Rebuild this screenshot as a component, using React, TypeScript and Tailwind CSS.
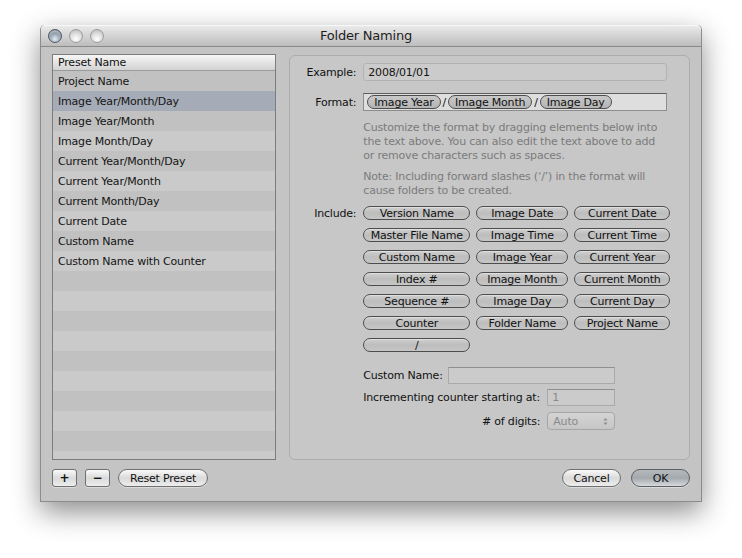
import React from "react";

const F = "font-['DejaVu_Sans',sans-serif] tracking-[-0.2px]";

const presets = [
  "Project Name",
  "Image Year/Month/Day",
  "Image Year/Month",
  "Image Month/Day",
  "Current Year/Month/Day",
  "Current Year/Month",
  "Current Month/Day",
  "Current Date",
  "Custom Name",
  "Custom Name with Counter",
];

const includes: [string, string, string][] = [
  ["Version Name", "Image Date", "Current Date"],
  ["Master File Name", "Image Time", "Current Time"],
  ["Custom Name", "Image Year", "Current Year"],
  ["Index #", "Image Month", "Current Month"],
  ["Sequence #", "Image Day", "Current Day"],
  ["Counter", "Folder Name", "Project Name"],
  ["/", "", ""],
];

function Pill({ label, w }: { label: string; w: string }) {
  return (
    <div
      className={`${w} h-[14px] rounded-full border border-[#4d4d4d] bg-gradient-to-b from-[#cfcfcf] via-[#bdbdbd] to-[#c6c6c6] flex items-center justify-center text-[11px] leading-none text-[#111] shadow-[inset_0_1px_0_rgba(255,255,255,0.35)] whitespace-nowrap`}
    >
      {label}
    </div>
  );
}

function Token({ label }: { label: string }) {
  return (
    <span className="inline-flex items-center h-[14px] px-[6px] rounded-full border border-[#4d4d4d] bg-gradient-to-b from-[#c9c9c9] to-[#b4b4b4] text-[11px] leading-none text-[#111] whitespace-nowrap">
      {label}
    </span>
  );
}

function Light({ active }: { active?: boolean }) {
  return (
    <div
      className={
        active
          ? "w-[14px] h-[14px] rounded-full border border-[#4f5863] bg-[radial-gradient(circle_at_50%_75%,#e3ecf3_0%,#9aa8b6_45%,#48525d_100%)] shadow-[inset_0_2px_2px_rgba(255,255,255,0.5)]"
          : "w-[14px] h-[14px] rounded-full border border-[#9c9c9c] bg-[radial-gradient(circle_at_50%_75%,#ffffff_0%,#dedede_50%,#b5b5b5_100%)]"
      }
    />
  );
}

function Btn({ children, w, def, round = true }: { children: React.ReactNode; w: string; def?: boolean; round?: boolean }) {
  return (
    <div
      className={`${w} h-[18px] ${round ? "rounded-full" : "rounded-[3px]"} border ${
        def
          ? "border-[#5a5e63] bg-gradient-to-b from-[#b5b9be] via-[#a4a9ae] to-[#d7dadd]"
          : "border-[#6f6f6f] bg-gradient-to-b from-[#fafafa] via-[#dadada] to-[#ededed]"
      } flex items-center justify-center text-[11px] leading-none text-[#111] shadow-[0_1px_0_rgba(255,255,255,0.4)]`}
    >
      {children}
    </div>
  );
}

export default function App() {
  return (
    <div className={`w-[742px] h-[558px] bg-white pt-[25px] pl-[40px] ${F}`}>
      <div className="w-[662px] h-[477px] bg-[#c4c4c4] rounded-t-[5px] border-x border-b border-[#8c8c8c] shadow-[0_10px_28px_rgba(0,0,0,0.45)] flex flex-col">
        {/* title bar */}
        <div className="h-[22px] rounded-t-[5px] bg-gradient-to-b from-[#ececec] to-[#bdbdbd] border-b border-[#8a8a8a] flex items-center shadow-[inset_0_1px_0_#f8f8f8]">
          <div className="w-[74px] flex items-center gap-[7px] pl-[7px]">
            <Light active />
            <Light />
            <Light />
          </div>
          <div className="flex-1 text-center text-[13px] leading-none text-[#1e1e1e]">Folder Naming</div>
          <div className="w-[84px]" />
        </div>

        {/* body */}
        <div className="flex-1 px-[11px] pt-[7px] flex flex-col">
          <div className="flex gap-[13px]">
            {/* table */}
            <div className="w-[225px] h-[406px] border border-[#7c7c7c] bg-[#c2c2c2] overflow-hidden flex flex-col">
              <div className="h-[16px] shrink-0 bg-gradient-to-b from-[#f6f6f6] via-[#e4e4e4] to-[#d3d3d3] border-b border-[#9a9a9a] flex items-center px-[5px] text-[11px] leading-none text-[#111]">
                Preset Name
              </div>
              {Array.from({ length: 20 }).map((_, i) => {
                const label = presets[i] ?? "";
                const bg = i === 1 ? "bg-[#a5acb7]" : i % 2 === 0 ? "bg-[#c1c1c1]" : "bg-[#cacaca]";
                return (
                  <div key={i} className={`h-[20px] shrink-0 ${bg} flex items-center px-[5px] text-[11px] leading-none text-[#141414]`}>
                    {label}
                  </div>
                );
              })}
            </div>

            {/* group box */}
            <div className="w-[402px] h-[405px] mt-[1px] rounded-[6px] border border-[#adadad] bg-[#c7c7c7] pt-[7px] flex flex-col text-[11px] leading-none text-[#111]">
              <div className="flex items-center gap-[7px]">
                <div className="w-[66px] text-right">Example:</div>
                <div className="w-[304px] h-[18px] rounded-[3px] border border-[#b2b2b2] bg-[#cbcbcb] flex items-center px-[4px] text-[#141414]">
                  2008/01/01
                </div>
              </div>
              <div className="flex items-center gap-[7px] mt-[12px]">
                <div className="w-[66px] text-right">Format:</div>
                <div className="w-[304px] h-[18px] border border-[#8d8d8d] border-t-[#5e5e5e] bg-[#dedede] flex items-center pl-[3px] gap-[2px]">
                  <Token label="Image Year" />
                  <span>/</span>
                  <Token label="Image Month" />
                  <span>/</span>
                  <Token label="Image Day" />
                </div>
              </div>
              <div className="ml-[73px] w-[300px] mt-[10px] text-[11px] leading-[14px] text-[#7b7b7b]">
                <p>Customize the format by dragging elements below into the text above. You can also edit the text above to add or remove characters such as spaces.</p>
                <p className="mt-[7px]">Note: Including forward slashes (‘/’) in the format will cause folders to be created.</p>
              </div>
              <div className="flex gap-[7px] mt-[8px]">
                <div className="w-[66px] text-right h-[14px] flex items-center justify-end">Include:</div>
                <div className="flex flex-col gap-[8px]">
                  {includes.map((r, i) => (
                    <div key={i} className="flex gap-[6px]">
                      <Pill label={r[0]} w="w-[107px]" />
                      {r[1] && <Pill label={r[1]} w="w-[92px]" />}
                      {r[2] && <Pill label={r[2]} w="w-[96px]" />}
                    </div>
                  ))}
                </div>
              </div>
              <div className="ml-[73px] w-[252px] mt-[15px] flex flex-col gap-[5px]">
                <div className="flex items-center justify-between">
                  <span>Custom Name:</span>
                  <div className="w-[167px] h-[17px] border border-[#a9a9a9] border-t-[#8f8f8f] bg-[#cbcbcb]" />
                </div>
                <div className="flex items-center justify-between">
                  <span>Incrementing counter starting at:</span>
                  <div className="w-[68px] h-[17px] border border-[#a9a9a9] border-t-[#8f8f8f] bg-[#cbcbcb] flex items-center px-[4px] text-[#8a8a8a]">1</div>
                </div>
                <div className="flex items-center justify-end gap-[7px] mt-[1px]">
                  <span># of digits:</span>
                  <div className="w-[68px] h-[18px] rounded-[4px] border border-[#a6a6a6] bg-gradient-to-b from-[#d4d4d4] to-[#c6c6c6] flex items-center justify-between pl-[5px] pr-[6px] text-[#8a8a8a]">
                    <span>Auto</span>
                    <svg width="5" height="9" viewBox="0 0 5 9">
                      <path d="M0.5 3.5 L2.5 1 L4.5 3.5 Z" fill="#8c8c8c" />
                      <path d="M0.5 5.5 L2.5 8 L4.5 5.5 Z" fill="#8c8c8c" />
                    </svg>
                  </div>
                </div>
              </div>
            </div>
          </div>

          {/* bottom buttons */}
          <div className="mt-[9px] flex items-center">
            <Btn w="w-[25px]" round={false}>
              <span className="text-[12px] font-bold">+</span>
            </Btn>
            <div className="w-[8px]" />
            <Btn w="w-[25px]" round={false}>
              <span className="text-[12px] font-bold">−</span>
            </Btn>
            <div className="w-[8px]" />
            <Btn w="w-[90px]">Reset Preset</Btn>
            <div className="flex-1" />
            <Btn w="w-[59px]">Cancel</Btn>
            <div className="w-[10px]" />
            <Btn w="w-[59px]" def>
              OK
            </Btn>
          </div>
        </div>
      </div>
    </div>
  );
}
